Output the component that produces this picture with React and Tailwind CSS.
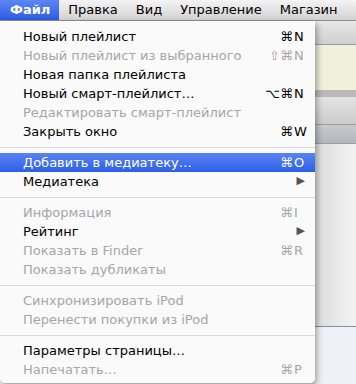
import React from 'react'

const menuBar = [
  { label: 'Файл', active: true },
  { label: 'Правка' },
  { label: 'Вид' },
  { label: 'Управление' },
  { label: 'Магазин' },
];

const items = [
  { label: 'Новый плейлист', mods: '⌘', key: 'N' },
  { label: 'Новый плейлист из выбранного', mods: '⇧⌘', key: 'N', disabled: true },
  { label: 'Новая папка плейлиста' },
  { label: 'Новый смарт-плейлист…', mods: '⌥⌘', key: 'N' },
  { label: 'Редактировать смарт-плейлист', disabled: true },
  { label: 'Закрыть окно', mods: '⌘', key: 'W' },
  { sep: true },
  { label: 'Добавить в медиатеку…', mods: '⌘', key: 'O', selected: true },
  { label: 'Медиатека', submenu: true },
  { sep: true },
  { label: 'Информация', mods: '⌘', key: 'I', disabled: true },
  { label: 'Рейтинг', submenu: true },
  { label: 'Показать в Finder', mods: '⌘', key: 'R', disabled: true },
  { label: 'Показать дубликаты', disabled: true },
  { sep: true },
  { label: 'Синхронизировать iPod', disabled: true },
  { label: 'Перенести покупки из iPod', disabled: true },
  { sep: true },
  { label: 'Параметры страницы…' },
  { label: 'Напечатать…', mods: '⌘', key: 'P', disabled: true },
];

const MenuItem = ({ item }) => {
  if (item.sep) {
    return (
      <div className="h-[12px] flex items-center">
        <div className="h-px w-full bg-[#dadada]" />
      </div>
    );
  }
  const color = item.selected
    ? 'text-white bg-gradient-to-b from-[#5b84f2] to-[#2d5fe6]'
    : item.disabled
    ? 'text-[#a6a6a6]'
    : 'text-black';
  return (
    <div className={`h-[19px] flex items-center pl-[23px] pr-[12px] ${color}`}>
      <span className="flex-1 whitespace-nowrap">{item.label}</span>
      {item.mods && (
        <span className="flex items-center">
          <span className="text-right">{item.mods}</span>
          <span className="w-[9px] ml-[1px]">{item.key}</span>
        </span>
      )}
      {item.submenu && (
        <span className={`text-[11px] mr-[-2px] ${item.selected ? 'text-white' : 'text-[#555]'}`}>▶</span>
      )}
    </div>
  );
};

const App = () => {
  return (
    <div
      className="w-[356px] h-[384px] overflow-hidden flex flex-col bg-[#ececec]"
      style={{ fontFamily: '"DejaVu Sans", "Liberation Sans", sans-serif' }}
    >
      {/* Menu bar */}
      <div className="h-[21px] shrink-0 flex items-stretch bg-gradient-to-b from-[#f4f4f4] to-[#d2d2d2] border-b border-[#8c8c8c] text-[13px] text-black">
        {menuBar.map((m) => (
          <div
            key={m.label}
            className={`flex items-center whitespace-nowrap ${
              m.active
                ? 'pl-[10px] pr-[9px] bg-gradient-to-b from-[#5d86f3] to-[#2a5be4] text-white font-bold'
                : 'px-[9px]'
            }`}
          >
            {m.label}
          </div>
        ))}
      </div>

      <div className="flex-1 flex">
        {/* Dropdown menu */}
        <div className="w-[315px] shrink-0 relative z-10">
          <div className="bg-[#fbfbfb]/95 pt-[6px] pb-[4px] rounded-b-[5px] shadow-[2px_3px_6px_rgba(0,0,0,0.35)] text-[13px]">
            {items.map((item, i) => (
              <MenuItem key={i} item={item} />
            ))}
          </div>
        </div>

        {/* Window behind the menu */}
        <div className="flex-1 flex flex-col">
          <div className="h-[24px] bg-gradient-to-b from-[#e8e8e8] to-[#cfcfcf] border-b border-[#9a9a9a]" />
          <div className="h-[45px] bg-[#efefdb]" />
          <div className="h-[7px] bg-[#b9b9b9]" />
          <div className="h-[28px] bg-gradient-to-b from-[#e4e4e4] to-[#cbcbcb] border-b border-[#9d9d9d]" />
          <div className="h-[19px] bg-gradient-to-b from-[#c8cacf] to-[#b3b6bc] border-b border-[#9a9da3]" />
          <div className="h-[183px] bg-gradient-to-r from-[#dcdcdc] to-[#f3f3f3] border-b border-[#8a9098]" />
          <div className="flex-1 bg-[#eef2f6]" />
        </div>
      </div>
    </div>
  );
};

export default App
